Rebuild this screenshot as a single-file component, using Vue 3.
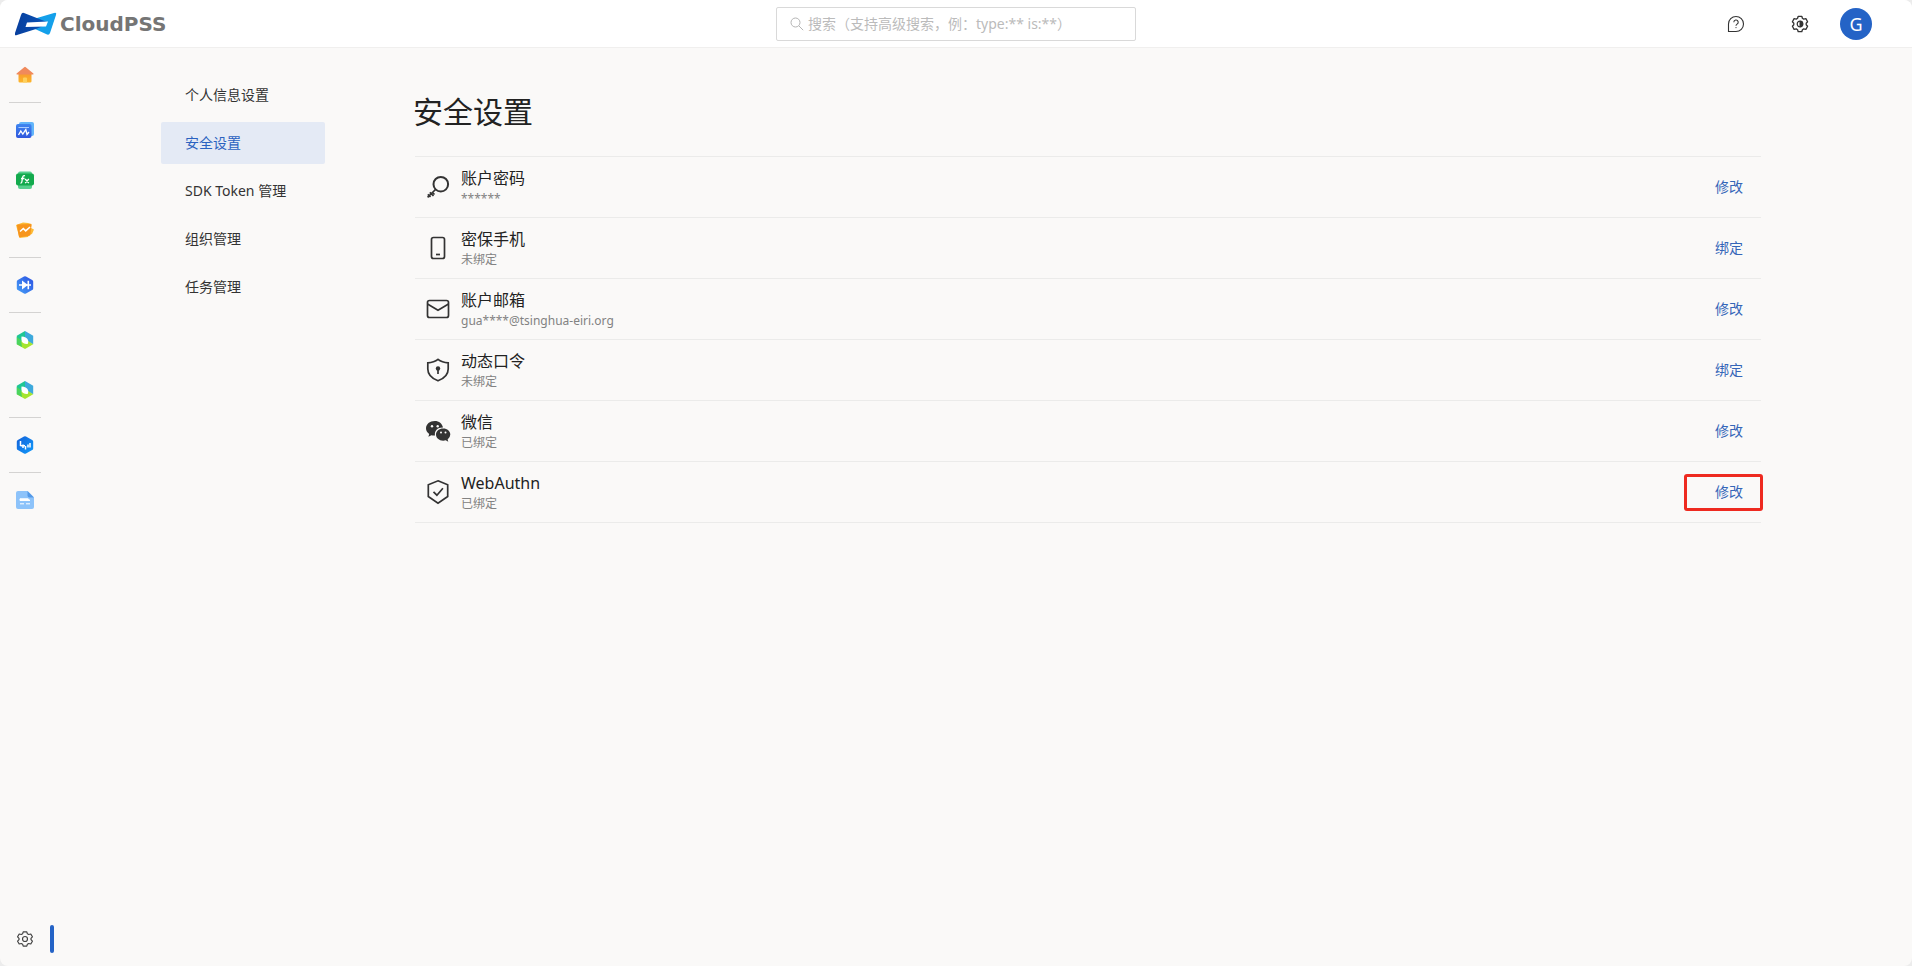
<script setup>
import { ref } from 'vue'

const query = ref('')

const apps = [
  { id: 'home', label: '首页', divider: true },
  { id: 'chart', label: '图表' },
  { id: 'fx', label: '函数' },
  { id: 'trend', label: '趋势', divider: true },
  { id: 'diode', label: '仿真', divider: true },
  { id: 'leaf', label: '能源' },
  { id: 'leaf', label: '能源规划', divider: true },
  { id: 'wave', label: '波形', divider: true },
  { id: 'doc', label: '文档' },
]

const menu = [
  { label: '个人信息设置' },
  { label: '安全设置', active: true },
  { label: 'SDK Token 管理' },
  { label: '组织管理' },
  { label: '任务管理' },
]

const rows = [
  { icon: 'key', title: '账户密码', note: '******', action: '修改' },
  { icon: 'phone', title: '密保手机', note: '未绑定', action: '绑定' },
  { icon: 'mail', title: '账户邮箱', note: 'gua****@tsinghua-eiri.org', action: '修改' },
  { icon: 'lock', title: '动态口令', note: '未绑定', action: '绑定' },
  { icon: 'wechat', title: '微信', note: '已绑定', action: '修改' },
  { icon: 'check', title: 'WebAuthn', note: '已绑定', action: '修改', marked: true },
]
</script>

<template>
  <div class="shell">
    <svg class="defs" width="0" height="0" aria-hidden="true">
      <defs>
        <linearGradient id="gHome" x1="0" y1="0" x2="0" y2="1"><stop offset="0" stop-color="#f79a2c" /><stop offset="1" stop-color="#fdb62b" /></linearGradient>
        <linearGradient id="gBlue" x1="0" y1="0" x2="0" y2="1"><stop offset="0" stop-color="#3f86f0" /><stop offset="1" stop-color="#2f57dd" /></linearGradient>
        <linearGradient id="gHex" x1="0" y1="1" x2="1" y2="0"><stop offset="0" stop-color="#46a0f7" /><stop offset="1" stop-color="#2c50e2" /></linearGradient>
        <linearGradient id="gWave" x1="0" y1="0" x2="1" y2="1"><stop offset="0" stop-color="#1460d8" /><stop offset="1" stop-color="#119bfb" /></linearGradient>
        <linearGradient id="gLogoL" x1="0" y1="0" x2="1" y2="0"><stop offset="0" stop-color="#083f9d" /><stop offset="1" stop-color="#0a54b8" /></linearGradient>
      </defs>
    </svg>

    <header class="topbar">
      <a class="brand" href="#">
        <svg width="42" height="24" viewBox="0 0 42 24" aria-hidden="true">
          <path d="M22 6 39 1Q42 0 41 3L35 21Q34 24 31 22L20 17Z" fill="#14a0ea" />
          <path d="M9 1 32 10 27 14.500 21 17 2 23Q-1 24 0 21L6 3Q7 0 9 1Z" fill="url(#gLogoL)" />
          <path d="M12 10.500 33 9.500 31 14.500 10.500 15Z" fill="#fff" />
        </svg>
        <span class="wordmark">CloudPSS</span>
      </a>
      <label class="search">
        <svg width="14" height="14" viewBox="0 0 14 14" fill="none" stroke="#b4b4b4" aria-hidden="true">
          <circle cx="5.5" cy="5.5" r="4.5" /><path d="m8.8 8.8 4.4 4.4" />
        </svg>
        <input v-model="query" type="text" aria-label="搜索" placeholder="搜索（支持高级搜索，例：type:** is:**）" />
      </label>
      <div class="tools">
        <button type="button" aria-label="帮助">
          <svg width="18" height="18" viewBox="0 0 18 18" fill="none" stroke="#333" aria-hidden="true">
            <path d="M1.5 16.4V9a7.5 7.5 0 1 1 7.5 7.5H1.5Z" stroke-width="1.1" />
            <path d="M6.8 7.2a2.2 2.2 0 1 1 3.3 1.9c-.8.5-1.1.8-1.1 1.7" stroke-width="1.1" />
            <circle cx="9" cy="12.6" r=".6" fill="#333" stroke="none" />
          </svg>
        </button>
        <button type="button" aria-label="设置">
          <svg width="18" height="18" viewBox="0 0 18 18" fill="none" stroke="#333" aria-hidden="true">
            <path d="M7.2 1.3h3.6l.6 2 1.3.8 2.2-.5 1.7 3.1-1.400 1.500v1.600l1.400 1.500-1.700 3.100-2.200-.5-1.300.8-.6 2H7.200l-.6-2-1.300-.8-2.200.5-1.700-3.100L2.800 9.800V8.200L1.400 6.700l1.700-3.100 2.200.5 1.300-.8Z" stroke-width="1.300" stroke-linejoin="round" />
            <circle cx="9" cy="9" r="2.800" stroke-width="1.200" /><path d="M9 6.200a2.800 2.800 0 0 1 0 5.600Z" fill="#333" />
          </svg>
        </button>
        <button type="button" class="avatar" aria-label="账户">G</button>
      </div>
    </header>

    <div class="body">
      <nav class="rail" aria-label="应用">
        <template v-for="(app, i) in apps" :key="i">
          <a href="#" :aria-label="app.label">
            <svg width="20" height="20" viewBox="0 0 20 20" aria-hidden="true">
              <g v-if="app.id === 'home'">
                <path d="M3.500 8h13v8.200q0 1.300-1.300 1.300H4.800q-1.300 0-1.300-1.300Z" fill="url(#gHome)" />
                <path d="M8 17.500v-4q0-1 1-1h2q1 0 1 1v4Z" fill="#fdd05c" />
                <path d="M9.200 2.200q.8-.7 1.600 0l7.600 6.200q.8 1.100-.6 1.100H2.200q-1.400 0-.6-1.100Z" fill="#f08a5c" />
              </g>
              <g v-else-if="app.id === 'chart'">
                <rect x="4" y="2" width="15" height="14" rx="2" fill="#62b5fa" />
                <rect x="1" y="4" width="15.500" height="14" rx="2" fill="url(#gBlue)" />
                <path d="M3.500 7.500h10.500" stroke="#a9ccff" stroke-width="1.200" />
                <path d="m3.500 15 2.300-4 2 3 3-4.500 1.200 5L14 12" fill="none" stroke="#fff" stroke-width="1.300" />
              </g>
              <g v-else-if="app.id === 'fx'">
                <rect x="3" y="1.500" width="14" height="17.500" rx="2" fill="#56cf8d" />
                <rect x="1" y="3.500" width="18" height="12" rx="2" fill="#13aa4d" />
                <path d="M10 5.800q-2-.6-2.300 1.300L6.800 12q-.2 1.200-1.300 1M6 8.500h3.500M10.200 9l3.600 4.200M13.800 9l-3.600 4.200" fill="none" stroke="#fff" stroke-width="1.300" />
              </g>
              <g v-else-if="app.id === 'trend'">
                <path d="m1 5 7-2.500L13 3l3.500 1-.5 4 3 1.500L17 14l-3 1-1 2-8.500 1Z" fill="#fdbb35" />
                <path d="M3 4.500 15.500 4q1 0 1 1l-1 9.500q0 1-1 1.200L5 17.200q-1 0-1.200-1L2 5.800Q2 4.600 3 4.500Z" fill="#f7951d" />
                <path d="m5 11.500 3.300-3 2.400 2.300L15 7" fill="none" stroke="#fff" stroke-width="1.600" />
              </g>
              <g v-else-if="app.id === 'diode'">
                <path d="M9 1.500q1-.6 2 0l6.200 3.400q1 .6 1 1.700v6.800q0 1.100-1 1.700L11 18.500q-1 .6-2 0l-6.200-3.400q-1-.6-1-1.700V6.600q0-1.100 1-1.700Z" fill="url(#gHex)" />
                <path d="M4 10h12M13.300 5.800v8.400" stroke="#fff" stroke-width="1.600" /><path d="m7 5.500 6 4.500-6 4.500Z" fill="#fff" />
              </g>
              <g v-else-if="app.id === 'leaf'">
                <path d="M10 1 1.800 5.700v8.600L10 10Z" fill="#1ec796" />
                <path d="m10 1 8.200 4.700v8.600L10 10Z" fill="#3da9dc" />
                <path d="M1.800 14.300 10 19l8.200-4.700L10 9Z" fill="#a5e52f" />
                <path d="M1.800 7v7.300L7 17l-1-7Z" fill="#4bd45d" />
                <path d="M6.500 6.500q5 .2 6.500 3.500.7 2-.3 4-4.500.4-6-2.700Q6.100 9.300 6.500 6.500Z" fill="#fff" />
              </g>
              <g v-else-if="app.id === 'wave'">
                <path d="M9 1.500q1-.6 2 0l6.200 3.400q1 .6 1 1.700v6.800q0 1.100-1 1.700L11 18.500q-1 .6-2 0l-6.200-3.400q-1-.6-1-1.700V6.600q0-1.100 1-1.700Z" fill="url(#gWave)" />
                <path d="M5.500 6v5M8 9.500v3.500M10.500 11v3.500M13 9.500v3M15 8v4.500M5.500 10.800H10" stroke="#fff" stroke-width="1.500" />
              </g>
              <g v-else>
                <path d="M3 1h9.500L19 7.500V17q0 2-2 2H3q-2 0-2-2V3q0-2 2-2Z" fill="#8dc3fa" />
                <path d="M12.500 1 19 7.500h-4.500q-2 0-2-2Z" fill="#5499e8" />
                <path d="M5 8.800h8l2 1.700H5Z" stroke="#fff" fill="#fff" /><path d="M5 13.800h4M11 13.800h4" stroke="#fff" />
              </g>
            </svg>
          </a>
          <hr v-if="app.divider" />
        </template>
        <a class="prefs" href="#" aria-label="偏好设置">
          <svg width="18" height="18" viewBox="0 0 18 18" fill="none" stroke="#444" aria-hidden="true">
            <path d="M7.200 1.800h3.600l.6 2 1.300.7 2.100-.5 1.600 2.800L15 8.300v1.400l1.400 1.500-1.600 2.800-2.100-.5-1.300.7-.6 2H7.200l-.6-2-1.300-.7-2.100.5-1.600-2.800L3 9.700V8.300L1.600 6.800 3.200 4l2.100.5 1.300-.7Z" stroke-width="1.200" stroke-linejoin="round" />
            <circle cx="9" cy="9" r="2.500" stroke-width="1.200" />
          </svg>
        </a>
      </nav>

      <div class="page">
        <nav class="menu" aria-label="设置">
          <a v-for="item in menu" :key="item.label" href="#" :class="{ active: item.active }">{{ item.label }}</a>
        </nav>

        <main>
          <h1>安全设置</h1>
          <ul>
            <li v-for="row in rows" :key="row.title">
              <svg class="icon" width="26" height="26" viewBox="0 0 26 26" fill="none" stroke="#333" stroke-width="1.700" aria-hidden="true">
                <g v-if="row.icon === 'key'">
                  <circle cx="15.800" cy="10.200" r="7.300" stroke-width="2" /><path d="M10.500 15.500 2.600 23.400M7.500 18.500l2 2M4.800 18.300l3.700 3.700M2.800 20.300l2.700 2.700" />
                </g>
                <g v-else-if="row.icon === 'phone'">
                  <rect x="6.500" y="2.500" width="13" height="21" rx="2" /><path d="M11 19.500h4" />
                </g>
                <g v-else-if="row.icon === 'mail'">
                  <rect x="2.500" y="4.500" width="21" height="17" rx="2" /><path d="M2.500 8 13 14.200 23.500 8" />
                </g>
                <g v-else-if="row.icon === 'lock'">
                  <path d="M13 2.300Q17 5.500 23.200 5.800V12q0 8-10.200 11.800Q2.800 20 2.800 12V5.800Q9 5.500 13 2.300Z" />
                  <circle cx="13" cy="11.500" r="2.200" fill="#333" stroke="none" /><path d="M13 12v5" />
                </g>
                <g v-else-if="row.icon === 'wechat'" fill="#333" stroke="none">
                  <path d="M9.800 3C4.800 3 1 6.200 1 10.300c0 2.400 1.200 4.300 3.200 5.700l-.8 2.800 3-1.600q1.600.5 3.600.4C9.200 13 12.600 9.400 18 9.600 17.300 5.700 14 3 9.800 3Z" />
                  <path d="M18.200 10.500c-4.200 0-7.200 2.700-7.200 6.100s3 6.100 7.200 6.100q1.300 0 2.500-.4l2.600 1.400-.7-2.300q2.700-2 2.700-4.800c0-3.400-3-6.100-7.100-6.100Z" />
                  <g fill="#faf9f8"><circle cx="7" cy="8.200" r="1.200" /><circle cx="12.700" cy="8.200" r="1.200" /><circle cx="16" cy="14.600" r="1" /><circle cx="20.500" cy="14.600" r="1" /></g>
                </g>
                <g v-else>
                  <path d="M13 1.800 22.700 5.800V17.500L13 24.200 3.300 17.500V5.800Z" /><path d="m8.500 12.800 3.400 3.400 6-7" />
                </g>
              </svg>
              <div class="text">
                <strong>{{ row.title }}</strong>
                <small>{{ row.note }}</small>
              </div>
              <button type="button" class="action">{{ row.action }}</button>
              <span v-if="row.marked" class="marker"></span>
            </li>
          </ul>
        </main>
      </div>
    </div>
  </div>
</template>

<style>
body {
  background: #ececec;
}
</style>

<style scoped>
* {
  box-sizing: border-box;
}
.shell {
  display: flex;
  flex-direction: column;
  min-height: 100vh;
  overflow: hidden;
  border-radius: 8px;
  background: #faf9f8;
  color: #333;
  font: 14px/20px "Noto Sans", "Noto Sans CJK SC", sans-serif;
}
.defs {
  position: absolute;
}
a {
  color: inherit;
  text-decoration: none;
}
button {
  border: 0;
  background: none;
  font: inherit;
  cursor: pointer;
}
svg {
  display: block;
  flex: none;
}
.topbar {
  display: grid;
  grid-template-columns: 1fr 360px 1fr;
  align-items: center;
  height: 48px;
  border-bottom: 1px solid #f0efee;
  background: #fff;
}
.brand {
  display: flex;
  align-items: center;
  gap: 3px;
  padding-left: 15px;
}
.wordmark {
  color: #757575;
  font: bold 20px/24px "DejaVu Sans", sans-serif;
}
.search {
  display: flex;
  align-items: center;
  gap: 4px;
  height: 34px;
  padding: 0 13px;
  border: 1px solid #d9d9d9;
  border-radius: 2px;
}
.search input {
  flex: 1;
  min-width: 0;
  padding: 0;
  border: 0;
  outline: 0;
  background: none;
  font: inherit;
}
.search input::placeholder {
  color: #bbb;
  opacity: 1;
}
.tools {
  display: flex;
  align-items: center;
  justify-content: flex-end;
  padding-right: 40px;
}
.tools button {
  display: flex;
  align-items: center;
  justify-content: center;
  width: 64px;
  height: 48px;
  padding: 0;
}
.tools .avatar {
  width: 32px;
  height: 32px;
  margin-left: 8px;
  border-radius: 50%;
  background: #2463c6;
  color: #fff;
  font-size: 18px;
}
.body {
  display: flex;
  flex: 1;
}
.rail {
  display: flex;
  flex-direction: column;
  width: 50px;
  padding: 2px 0;
}
.rail a {
  display: flex;
  align-items: center;
  justify-content: center;
  height: 50px;
}
.rail hr {
  width: 32px;
  height: 1px;
  margin: 2px auto;
  border: 0;
  background: #d4d3d2;
}
.rail .prefs {
  position: relative;
  margin-top: auto;
}
.prefs::after {
  content: "";
  position: absolute;
  top: 11px;
  left: 50px;
  width: 4px;
  height: 28px;
  border-radius: 2px;
  background: #2463c6;
}
.page {
  display: flex;
  flex: 1;
  gap: 90px;
  padding: 26px 151px 40px 111px;
}
.menu {
  display: flex;
  flex: none;
  flex-direction: column;
  gap: 6px;
  width: 164px;
}
.menu a {
  padding: 11px 24px;
  border-radius: 2px;
}
.menu .active {
  background: #e4eaf5;
  color: #2b62c0;
}
main {
  flex: 1;
}
h1 {
  margin: 18px 0 24px -2px;
  color: #222;
  font-size: 30px;
  font-weight: 400;
  line-height: 40px;
}
ul {
  margin: 0;
  padding: 0;
  border-top: 1px solid #ebebea;
  list-style: none;
}
li {
  position: relative;
  display: flex;
  align-items: center;
  height: 61px;
  padding-left: 10px;
  border-bottom: 1px solid #ebebea;
}
.text {
  display: flex;
  flex: 1;
  flex-direction: column;
  margin-left: 10px;
}
strong {
  color: #222;
  font-size: 16px;
  font-weight: 400;
  line-height: 24px;
}
small {
  color: #828282;
  font-size: 12px;
  line-height: 18px;
}
.action {
  padding: 6px 18px;
  color: #3566b8;
}
.marker {
  position: absolute;
  top: 12px;
  right: -2px;
  width: 79px;
  height: 37px;
  border: 3px solid #ee2a20;
  border-radius: 3px;
  pointer-events: none;
}
</style>
